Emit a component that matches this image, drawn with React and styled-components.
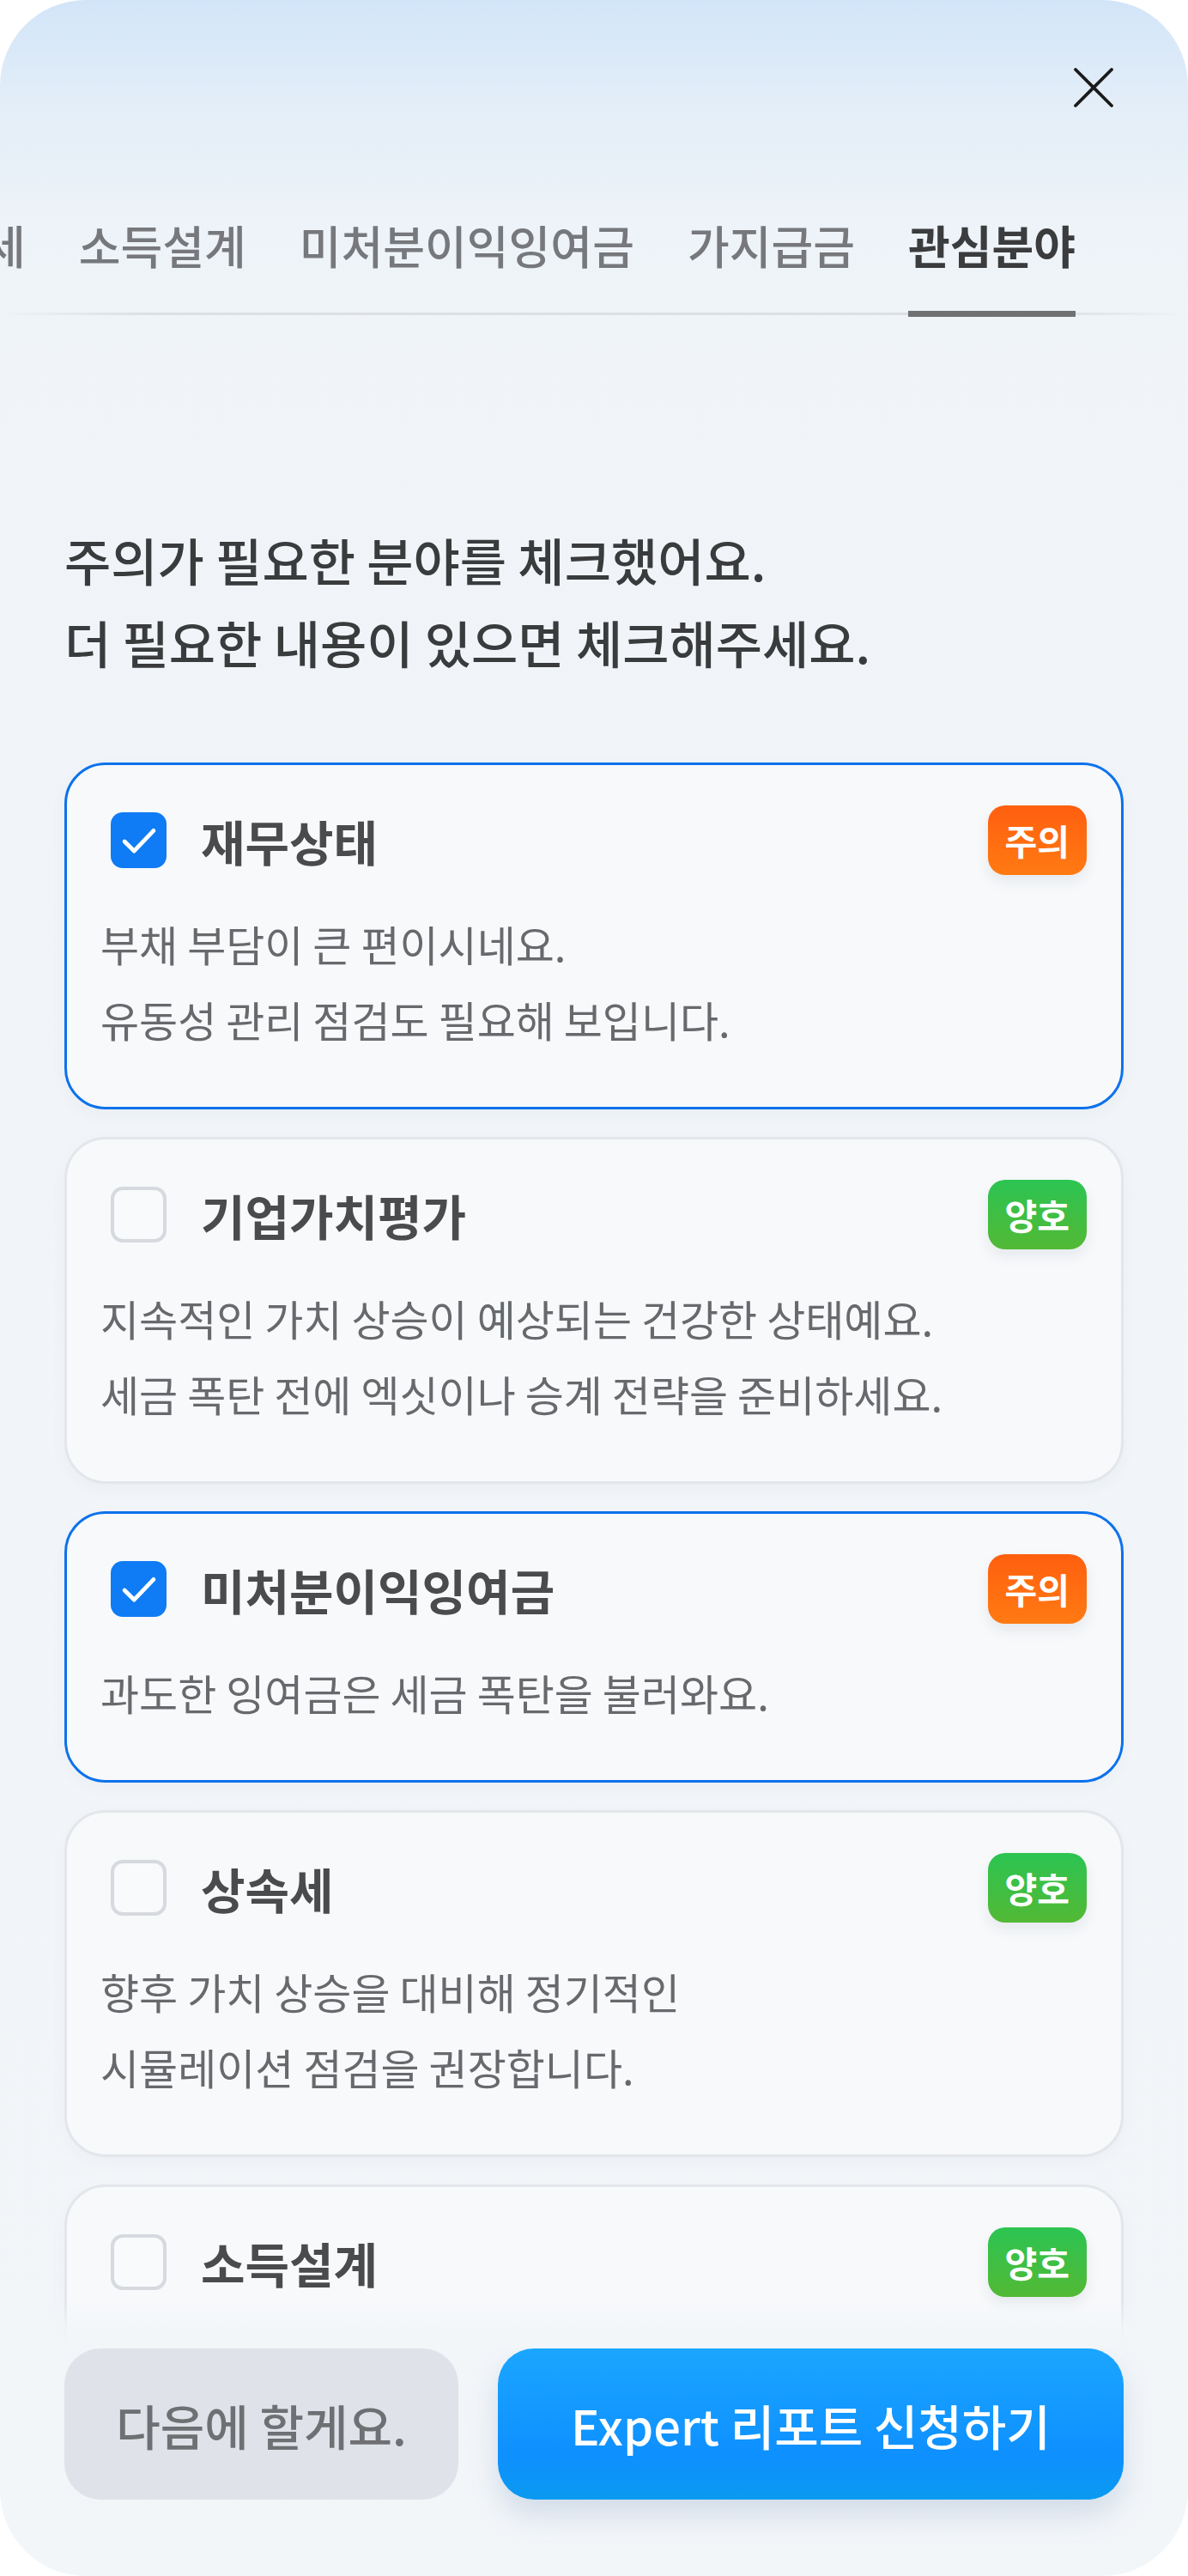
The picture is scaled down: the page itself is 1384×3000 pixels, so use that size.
import React from "react"
import styled, { createGlobalStyle, css } from "styled-components"

const GlobalStyle = createGlobalStyle`
  html, body {
    margin: 0;
    padding: 0;
    background: #ffffff;
  }
  body {
    font-family: "Noto Sans CJK KR", "Noto Sans", sans-serif;
    -webkit-font-smoothing: antialiased;
  }
  * {
    box-sizing: border-box;
  }
`

const Frame = styled.div`
  width: 1384px;
  height: 3000px;
  border-radius: 100px;
  overflow: hidden;
  display: flex;
  flex-direction: column;
  background: linear-gradient(
    180deg,
    #d2e5f8 0px,
    #e4eef8 130px,
    #edf3f8 260px,
    #f0f4f8 420px,
    #f3f6f9 100%
  );
`

const Header = styled.header`
  height: 200px;
  flex-shrink: 0;
  display: flex;
  justify-content: flex-end;
  align-items: flex-start;
  padding: 78px 86px 0 0;
`

const CloseButton = styled.button`
  width: 48px;
  height: 48px;
  padding: 0;
  border: 0;
  background: transparent;
  cursor: pointer;
  display: flex;
`

const ScrollArea = styled.main`
  flex: 1;
  min-height: 0;
  overflow: hidden;
  display: flex;
  flex-direction: column;
`

const TabBar = styled.nav`
  position: relative;
  flex-shrink: 0;
  display: flex;
  justify-content: flex-end;
  gap: 62px;
  overflow: hidden;
  padding: 55px 131px 0 0;

  &::after {
    content: "";
    position: absolute;
    left: 0;
    right: 0;
    bottom: 2px;
    height: 3px;
    background: linear-gradient(
      90deg,
      rgba(220, 223, 228, 0) 0%,
      #dcdfe4 12%,
      #dcdfe4 88%,
      rgba(220, 223, 228, 0) 100%
    );
  }
`

const Tab = styled.span`
  position: relative;
  z-index: 1;
  flex-shrink: 0;
  white-space: nowrap;
  font-size: 53px;
  line-height: 60px;
  padding-bottom: 47px;
  border-bottom: 7px solid transparent;
  font-weight: 500;
  color: #76787c;

  ${(p) =>
    p.$active &&
    css`
      font-weight: 700;
      color: #3b3c3e;
      border-bottom-color: #707173;
    `}
`

const Content = styled.section`
  padding: 0 75px;
`

const Heading = styled.h2`
  margin: 235px 0 0;
  font-size: 59px;
  line-height: 96px;
  font-weight: 500;
  color: #3a3b3d;
`

const CardList = styled.ul`
  list-style: none;
  margin: 92px 0 0;
  padding: 0;
  display: flex;
  flex-direction: column;
  gap: 32px;
`

const Card = styled.li`
  border-radius: 48px;
  background: #f7f9fb;
  border: 3px solid ${(p) => (p.$checked ? "#0d72ec" : "#e3e6ea")};
  box-shadow: 0 6px 20px rgba(40, 60, 90, 0.035);
  padding: 47px 40px 58px 39px;
`

const CardHead = styled.div`
  height: 81px;
  display: flex;
  align-items: center;
`

const Check = styled.span`
  width: 65px;
  height: 65px;
  margin: 0 40px 0 12px;
  flex-shrink: 0;
  border-radius: 14px;
  display: flex;
  align-items: center;
  justify-content: center;
  ${(p) =>
    p.$checked
      ? css`
          background: #0f7bf5;
        `
      : css`
          background: #f8fafc;
          border: 4px solid #d6d9de;
        `}
`

const Title = styled.h3`
  flex: 1;
  margin: 0;
  font-size: 56px;
  line-height: 60px;
  font-weight: 700;
  color: #4a4b4d;
`

const Badge = styled.span`
  flex-shrink: 0;
  height: 81px;
  padding: 0 20px;
  border-radius: 20px;
  font-size: 41px;
  line-height: 81px;
  font-weight: 700;
  color: #ffffff;
  box-shadow: 0 8px 16px rgba(40, 50, 70, 0.08);
  background: ${(p) =>
    p.$tone === "warn"
      ? "linear-gradient(180deg, #ff5f0f 0%, #ff7a12 100%)"
      : "linear-gradient(180deg, #2cc452 0%, #52b935 100%)"};
`

const CardBody = styled.div`
  margin-top: 36px;
  font-size: 49px;
  line-height: 88px;
  font-weight: 400;
  color: #67696c;
`

const Line = styled.div`
  white-space: nowrap;
`

const Footer = styled.footer`
  position: relative;
  flex-shrink: 0;
  display: flex;
  gap: 46px;
  padding: 0 75px 89px;

  &::before {
    content: "";
    position: absolute;
    left: 0;
    right: 0;
    bottom: 100%;
    height: 56px;
    background: linear-gradient(
      180deg,
      rgba(243, 246, 249, 0) 0%,
      rgba(243, 246, 249, 0.85) 60%,
      #f3f6f9 100%
    );
  }
`

const ActionButton = styled.button`
  height: 176px;
  border: 0;
  border-radius: 42px;
  font-family: inherit;
  font-size: 56px;
  font-weight: 500;
  cursor: pointer;

  ${(p) =>
    p.$primary
      ? css`
          flex: 1;
          color: #ffffff;
          background: linear-gradient(180deg, #1ba6ff 0%, #0e90ff 70%, #0a9af0 100%);
          box-shadow: 0 18px 34px rgba(40, 90, 150, 0.16);
        `
      : css`
          width: 459px;
          color: #6e7073;
          background: #dfe3e9;
        `}
`

const tabs = ["재무상태", "기업가치평가", "상속세", "소득설계", "미처분이익잉여금", "가지급금", "관심분야"]

const items = [
  {
    title: "재무상태",
    checked: true,
    tone: "warn",
    lines: ["부채 부담이 큰 편이시네요.", "유동성 관리 점검도 필요해 보입니다."],
  },
  {
    title: "기업가치평가",
    checked: false,
    tone: "good",
    lines: ["지속적인 가치 상승이 예상되는 건강한 상태예요.", "세금 폭탄 전에 엑싯이나 승계 전략을 준비하세요."],
  },
  {
    title: "미처분이익잉여금",
    checked: true,
    tone: "warn",
    lines: ["과도한 잉여금은 세금 폭탄을 불러와요."],
  },
  {
    title: "상속세",
    checked: false,
    tone: "good",
    lines: ["향후 가치 상승을 대비해 정기적인", "시뮬레이션 점검을 권장합니다."],
  },
  {
    title: "소득설계",
    checked: false,
    tone: "good",
    lines: ["급여와 배당의 균형이 잘 잡혀 있어요."],
  },
  {
    title: "가지급금",
    checked: false,
    tone: "good",
    lines: ["가지급금 관리가 안정적으로 되고 있어요."],
  },
]

const CloseIcon = () => (
  <svg width="48" height="48" viewBox="0 0 48 48" fill="none">
    <path d="M3 3L45 45M45 3L3 45" stroke="#1b1b1c" strokeWidth="3.8" strokeLinecap="round" />
  </svg>
)

const CheckMark = () => (
  <svg width="58" height="58" viewBox="0 0 24 24" fill="none">
    <path
      d="M5 12.4L9.6 17L19 7.2"
      stroke="#ffffff"
      strokeWidth="2"
      strokeLinecap="round"
      strokeLinejoin="round"
    />
  </svg>
)

export default function App() {
  return (
    <>
      <GlobalStyle />
      <Frame>
        <Header>
          <CloseButton aria-label="닫기">
            <CloseIcon />
          </CloseButton>
        </Header>

        <ScrollArea>
          <TabBar>
            {tabs.map((t) => (
              <Tab key={t} $active={t === "관심분야"}>
                {t}
              </Tab>
            ))}
          </TabBar>

          <Content>
            <Heading>
              주의가 필요한 분야를 체크했어요.
              <br />
              더 필요한 내용이 있으면 체크해주세요.
            </Heading>

            <CardList>
              {items.map((item) => (
                <Card key={item.title} $checked={item.checked}>
                  <CardHead>
                    <Check $checked={item.checked}>{item.checked && <CheckMark />}</Check>
                    <Title>{item.title}</Title>
                    <Badge $tone={item.tone}>{item.tone === "warn" ? "주의" : "양호"}</Badge>
                  </CardHead>
                  <CardBody>
                    {item.lines.map((l) => (
                      <Line key={l}>{l}</Line>
                    ))}
                  </CardBody>
                </Card>
              ))}
            </CardList>
          </Content>
        </ScrollArea>

        <Footer>
          <ActionButton>다음에 할게요.</ActionButton>
          <ActionButton $primary>Expert 리포트 신청하기</ActionButton>
        </Footer>
      </Frame>
    </>
  )
}
